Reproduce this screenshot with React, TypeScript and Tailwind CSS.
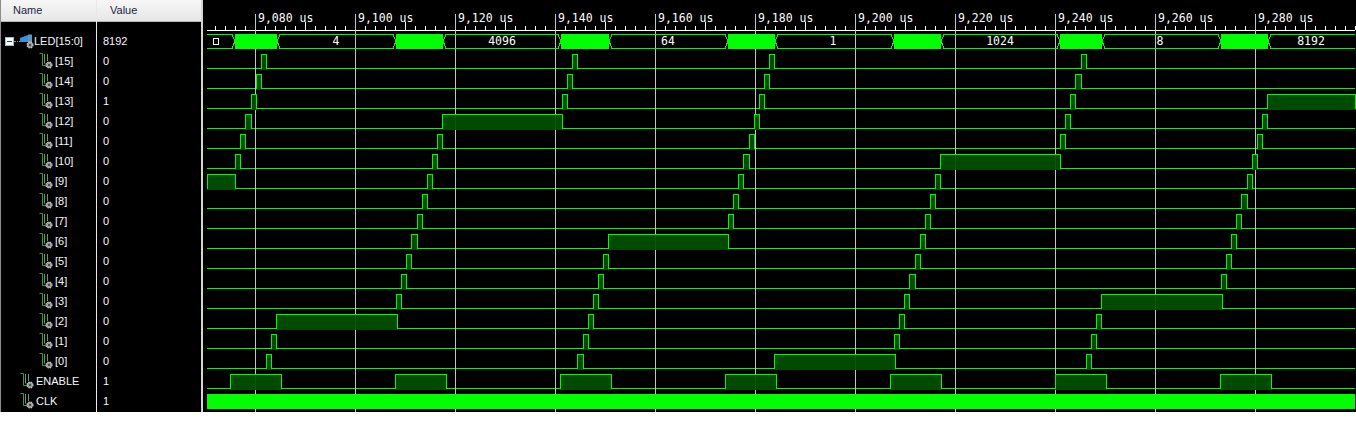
const GREEN = "#00f800";
const FILL = "#005000";

type Signal = {
  name: string;
  value: string;
  // [start, end] of each high stretch, in page pixels
  highs: [number, number][];
};

const bits: Signal[] = [
  { name: "[15]", value: "0", highs: [[261, 267], [572, 578], [769, 775], [1081, 1087]] },
  { name: "[14]", value: "0", highs: [[256, 262], [567, 573], [764, 770], [1075, 1082]] },
  { name: "[13]", value: "1", highs: [[251, 257], [562, 568], [759, 765], [1070, 1076], [1267, 1356]] },
  { name: "[12]", value: "0", highs: [[245, 252], [442, 563], [754, 760], [1065, 1071], [1262, 1268]] },
  { name: "[11]", value: "0", highs: [[240, 246], [437, 443], [749, 755], [1060, 1066], [1257, 1263]] },
  { name: "[10]", value: "0", highs: [[235, 241], [432, 438], [743, 750], [940, 1061], [1252, 1258]] },
  { name: "[9]", value: "0", highs: [[207, 236], [427, 433], [738, 744], [935, 941], [1247, 1253]] },
  { name: "[8]", value: "0", highs: [[422, 428], [733, 739], [930, 936], [1241, 1248]] },
  { name: "[7]", value: "0", highs: [[417, 423], [728, 734], [925, 931], [1236, 1242]] },
  { name: "[6]", value: "0", highs: [[411, 418], [608, 729], [920, 926], [1231, 1237]] },
  { name: "[5]", value: "0", highs: [[406, 412], [603, 609], [915, 921], [1226, 1232]] },
  { name: "[4]", value: "0", highs: [[401, 407], [598, 604], [909, 916], [1221, 1227]] },
  { name: "[3]", value: "0", highs: [[396, 402], [593, 599], [904, 910], [1101, 1223]] },
  { name: "[2]", value: "0", highs: [[276, 398], [588, 594], [899, 905], [1096, 1102]] },
  { name: "[1]", value: "0", highs: [[271, 277], [583, 589], [894, 900], [1091, 1097]] },
  { name: "[0]", value: "0", highs: [[266, 272], [577, 584], [774, 896], [1086, 1092]] },
];

const enable: Signal = {
  name: "ENABLE",
  value: "1",
  highs: [[230, 282], [395, 447], [560, 612], [725, 777], [890, 942], [1055, 1107], [1220, 1272]],
};

const busBlocks: [number, number][] = [
  [235, 277], [396, 443], [561, 609], [728, 775], [894, 941], [1060, 1102], [1221, 1268],
];

const busLabels = [
  { x: 336, text: "4" },
  { x: 502, text: "4096" },
  { x: 668, text: "64" },
  { x: 833, text: "1" },
  { x: 1000, text: "1024" },
  { x: 1160, text: "8" },
  { x: 1311, text: "8192" },
];

const majors = [255, 355, 455, 555, 655, 755, 855, 955, 1055, 1155, 1255];
const timeLabels = ["9,080", "9,100", "9,120", "9,140", "9,160", "9,180", "9,200", "9,220", "9,240", "9,260", "9,280"];
const ticks = Array.from({ length: 115 }, (_, i) => 215 + i * 10);

const Gear = ({ cx, cy }: { cx: number; cy: number }) => (
  <>
    <circle cx={cx} cy={cy} r="3" fill="#9a9a9a" stroke="#c8c8c8" strokeWidth="1.2" strokeDasharray="1.4 1" />
    <circle cx={cx} cy={cy} r="1" fill="#333333" />
  </>
);

const SignalIcon = () => (
  <svg width="14" height="16" viewBox="0 0 14 16" className="shrink-0">
    <path d="M0.5 0.5H3.5V12.5H7" fill="none" stroke="#3f9a3f" />
    <path d="M5.5 1V10.5M8.5 1V8" fill="none" stroke="#5f9f6f" />
    <Gear cx={10} cy={12} />
  </svg>
);

const BusIcon = () => (
  <svg width="14" height="16" viewBox="0 0 14 16" className="shrink-0">
    <path d="M0 5L8 2V9L0 9Z" fill="#3a8fe0" />
    <path d="M8 1.5H12V10H8Z" fill="#6a93b8" />
    <Gear cx={10} cy={12} />
  </svg>
);

const Header = ({ label, className }: { label: string; className: string }) => (
  <div className={`h-[22px] flex items-center bg-gradient-to-b from-[#f7f7f7] to-[#e6e6e6] border-b border-[#b8b8b8] text-[#1b2440] ${className}`}>
    {label}
  </div>
);

const NameRow = ({ name, indent }: { name: string; indent: string }) => (
  <div className={`h-5 flex items-center gap-[2px] ${indent}`}>
    <SignalIcon />
    <span>{name}</span>
  </div>
);

const HighSection = ({ base, start, end }: { base: number; start: number; end: number }) => (
  <rect x={start} y={base - 13} width={end - start} height={15} fill={FILL} fillOpacity="0.94" />
);

const HighOutline = ({ base, start, end }: { base: number; start: number; end: number }) => (
  <path
    d={`M${start + 0.5} ${base + 0.5}V${base - 13.5}H${end - 0.5}V${base + 0.5}`}
    fill="none"
    stroke={GREEN}
  />
);

// baseline between the high stretches
const lowPath = (highs: [number, number][], base: number) => {
  let x = 207;
  let d = "";
  highs.forEach(([s, e]) => {
    if (s > x) d += `M${x} ${base + 0.5}H${s}`;
    x = e;
  });
  if (x < 1355) d += `M${x} ${base + 0.5}H1355`;
  return d;
};

const busPath = () => {
  let d = "";
  let from = 207;
  busBlocks.forEach(([s, e], i) => {
    if (i === 0) {
      d += `M${from} 34.5H${s - 3}L${s} 41L${s - 3} 48.5H${from}`;
    } else {
      d += `M${from} 41L${from + 3} 34.5H${s - 3}L${s} 41L${s - 3} 48.5H${from + 3}Z`;
    }
    from = e;
  });
  d += `M${from} 41L${from + 3} 34.5H1355M${from} 41L${from + 3} 48.5H1355`;
  return d;
};

const Waves = () => (
  <svg width="1153" height="412" viewBox="203 0 1153 412" shapeRendering="crispEdges" className="block">
    {/* ruler */}
    <path d="M207 30.5H1355" stroke="#ffffff" fill="none" />
    {ticks.map((x) => (
      <path
        key={x}
        d={`M${x + 0.5} ${x % 100 === 5 ? 22 : 26}V30`}
        stroke="#ffffff"
      />
    ))}
    {timeLabels.map((label, i) => (
      <text
        key={label}
        x={majors[i] + 3}
        y={22}
        fill="#ffffff"
        fontSize="11.5"
        fontFamily="'DejaVu Sans Mono', monospace"
        shapeRendering="auto"
      >
        {label} us
      </text>
    ))}

    {/* low levels */}
    {bits.map((bit, i) => (
      <path key={bit.name} d={lowPath(bit.highs, 68 + i * 20)} stroke={GREEN} fill="none" />
    ))}
    <path d={lowPath(enable.highs, 388)} stroke={GREEN} fill="none" />

    {/* time grid */}
    {majors.map((x) => (
      <path key={x} d={`M${x + 0.5} 14V412`} stroke="#c4c4c4" />
    ))}

    {/* high levels */}
    {bits.map((bit, i) =>
      bit.highs.map(([s, e]) => <HighSection key={`${bit.name}-${s}`} base={68 + i * 20} start={s} end={e} />)
    )}
    {enable.highs.map(([s, e]) => (
      <HighSection key={s} base={388} start={s} end={e} />
    ))}
    {bits.map((bit, i) =>
      bit.highs.map(([s, e]) => <HighOutline key={`${bit.name}-${s}`} base={68 + i * 20} start={s} end={e} />)
    )}
    {enable.highs.map(([s, e]) => (
      <HighOutline key={s} base={388} start={s} end={e} />
    ))}

    {/* LED bus */}
    <path d={busPath()} stroke={GREEN} fill="none" />
    {busBlocks.map(([s, e]) => (
      <rect key={s} x={s} y={34} width={e - s} height={15} fill="#00ff00" />
    ))}
    <rect x={213.5} y={38.5} width={5} height={6} fill="none" stroke="#ffffff" />
    {busLabels.map((label) => (
      <text
        key={label.x}
        x={label.x}
        y={45}
        textAnchor="middle"
        fill="#ffffff"
        fontSize="11.5"
        fontFamily="'DejaVu Sans Mono', monospace"
        shapeRendering="auto"
      >
        {label.text}
      </text>
    ))}

    {/* CLK */}
    <rect x={207} y={394} width={1148} height={15} fill="#00ff00" />
  </svg>
);

export default function App() {
  return (
    <div className="w-[1356px] h-[425px] bg-white overflow-hidden font-['Liberation_Sans',sans-serif] text-[11px] text-[#f4f8ff]">
      <div className="flex h-[412px] bg-black">
        <div className="w-[97px] shrink-0 border-l border-r border-l-[#8c8c8c] border-r-[#e8e8e8]">
          <Header label="Name" className="pl-[12px]" />
          <div className="pt-[9px]">
            <div className="h-5 flex items-center pl-[4px]">
              <div className="w-[9px] h-[9px] border border-[#a8b4c8] bg-white flex items-center justify-center shrink-0">
                <div className="w-[5px] h-px bg-[#1c3a78]" />
              </div>
              <div className="w-[6px] border-t border-dotted border-[#9a9a9a] shrink-0" />
              <BusIcon />
              <span>LED[15:0]</span>
            </div>
            {bits.map((bit) => (
              <NameRow key={bit.name} name={bit.name} indent="pl-[38px]" />
            ))}
            <NameRow name="ENABLE" indent="pl-[19px]" />
            <NameRow name="CLK" indent="pl-[19px]" />
          </div>
        </div>

        <div className="w-[106px] shrink-0 border-r-2 border-[#d4d4d4]">
          <Header label="Value" className="pl-[13px]" />
          <div className="pt-[9px] pl-[6px]">
            <div className="h-5 flex items-center">8192</div>
            {bits.map((bit) => (
              <div key={bit.name} className="h-5 flex items-center">
                {bit.value}
              </div>
            ))}
            <div className="h-5 flex items-center">1</div>
            <div className="h-5 flex items-center">1</div>
          </div>
        </div>

        <Waves />
      </div>
    </div>
  );
}
